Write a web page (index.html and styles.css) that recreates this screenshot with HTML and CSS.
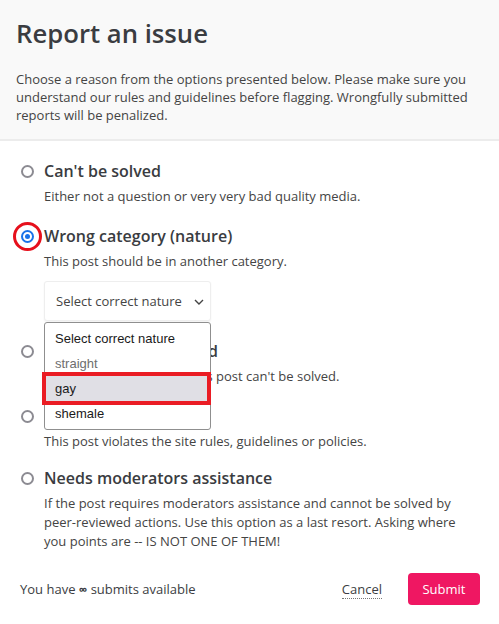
FILE: index.html
```html
<!DOCTYPE html>
<html>
<head>
<meta charset="utf-8">
<link rel="stylesheet" href="styles.css">
</head>
<body>
<div class="modal">
  <header class="head">
    <h1 class="title">Report an issue</h1>
    <p class="intro">Choose a reason from the options presented below. Please make sure you understand our rules and guidelines before flagging. Wrongfully submitted reports will be penalized.</p>
  </header>
  <div class="body">
    <div class="option">
      <span class="radio"></span>
      <div class="opt-text">
        <div class="label">Can't be solved</div>
        <div class="desc">Either not a question or very very bad quality media.</div>
      </div>
    </div>
    <div class="option">
      <span class="radio checked"><span class="mark"></span></span>
      <div class="opt-text">
        <div class="label">Wrong category (nature)</div>
        <div class="desc">This post should be in another category.</div>
        <div class="select-wrap">
          <div class="select">
            <span>Select correct nature</span>
            <svg class="chev" width="10" height="6" viewBox="0 0 10 6"><path d="M1 1l4 4 4-4" fill="none" stroke="#444" stroke-width="1.4"/></svg>
          </div>
          <ul class="popup">
            <li class="pop-item">Select correct nature</li>
            <li class="pop-item muted">straight</li>
            <li class="pop-item hl">gay</li>
            <li class="pop-item">shemale</li>
          </ul>
          <div class="hl-box"></div>
        </div>
      </div>
    </div>
    <div class="option">
      <span class="radio"></span>
      <div class="opt-text">
        <div class="label">Media missing or dead</div>
        <div class="desc">The media is missing so this post can't be solved.</div>
      </div>
    </div>
    <div class="option">
      <span class="radio"></span>
      <div class="opt-text">
        <div class="label">Rule violation</div>
        <div class="desc">This post violates the site rules, guidelines or policies.</div>
      </div>
    </div>
    <div class="option last">
      <span class="radio"></span>
      <div class="opt-text">
        <div class="label">Needs moderators assistance</div>
        <div class="desc">If the post requires moderators assistance and cannot be solved by peer-reviewed actions. Use this option as a last resort. Asking where you points are -- IS NOT ONE OF THEM!</div>
      </div>
    </div>
  </div>
  <footer class="foot">
    <span class="avail">You have <span class="inf">∞</span> submits available</span>
    <div class="actions">
      <span class="cancel">Cancel</span>
      <span class="submit">Submit</span>
    </div>
  </footer>
</div>
</body>
</html>
```
FILE: styles.css
```css
* { box-sizing: border-box; }
html, body { margin: 0; padding: 0; background: #fff; }
body { font-family: "Open Sans", "Noto Sans", sans-serif; color: #3b3d42; }
.modal { width: 499px; height: 624px; display: flex; flex-direction: column; }
.head { background: #f9f9f9; border-bottom: 2px solid #ececec; padding: 16px 16px 15px 16px; }
.title { margin: 0; font-size: 25.7px; font-weight: 600; color: #3a3c41; line-height: 36px; }
.intro { margin: 18px 0 0 0; font-size: 13px; line-height: 18px; color: #444; }
.body { padding: 18px 20px 0 21px; display: flex; flex-direction: column; gap: 18px; }
.option { display: flex; align-items: flex-start; gap: 10px; }
.option.last { margin-top: -3px; }
.radio { width: 13px; height: 13px; border: 2px solid #8c8b92; border-radius: 50%; margin-top: 6px; flex: none; position: relative; display: flex; align-items: center; justify-content: center; }
.radio.checked { border-color: #1a73e8; }
.radio.checked::before { content: ""; position: absolute; width: 5px; height: 5px; background: #1a73e8; border-radius: 50%; }
.radio.checked .mark { position: absolute; width: 29px; height: 29px; border: 3px solid #e6101c; border-radius: 50%; }
.label { font-size: 16px; font-weight: 600; line-height: 24px; color: #3a3c41; }
.desc { font-size: 13px; line-height: 19px; color: #444; margin-top: 4px; }
.select-wrap { position: relative; margin-top: 10px; }
.select { width: 167px; height: 40px; border: 1px solid #eee; border-radius: 3px; box-shadow: 0 1px 2px rgba(0,0,0,0.06); background: #fff; display: flex; align-items: center; justify-content: space-between; padding: 0 6px 0 11px; font-size: 13px; color: #444; }
.chev { margin-top: 1px; }
.popup { position: absolute; left: 0; top: 41px; width: 167px; margin: 0; padding: 3px 0 3px 0; list-style: none; background: #fff; border: 1px solid #8f8f8f; border-radius: 3px; font-family: "Liberation Sans", Arial, sans-serif; font-size: 13px; z-index: 2; }
.pop-item { height: 25px; line-height: 25px; padding: 0 10px; color: #1a1a1a; }
.pop-item.muted { color: #6e6e6e; }
.pop-item.hl { background: #e0dfe5; }
.hl-box { position: absolute; left: -2px; top: 91px; width: 169px; height: 33px; border: 4px solid #ea1c24; z-index: 3; }
.foot { margin-top: auto; display: flex; justify-content: space-between; align-items: center; padding: 0 19px 19px 20px; }
.avail { font-size: 13px; color: #3b3d42; }
.inf { font-size: 12px; font-weight: 700; }
.actions { display: flex; align-items: center; gap: 26px; }
.cancel { font-size: 13px; color: #3b3d42; border-bottom: 1px dotted #777; line-height: 18px; }
.submit { background: #ef1762; color: #fff; font-size: 13px; border-radius: 4px; width: 72px; height: 32px; display: flex; align-items: center; justify-content: center; }
```
